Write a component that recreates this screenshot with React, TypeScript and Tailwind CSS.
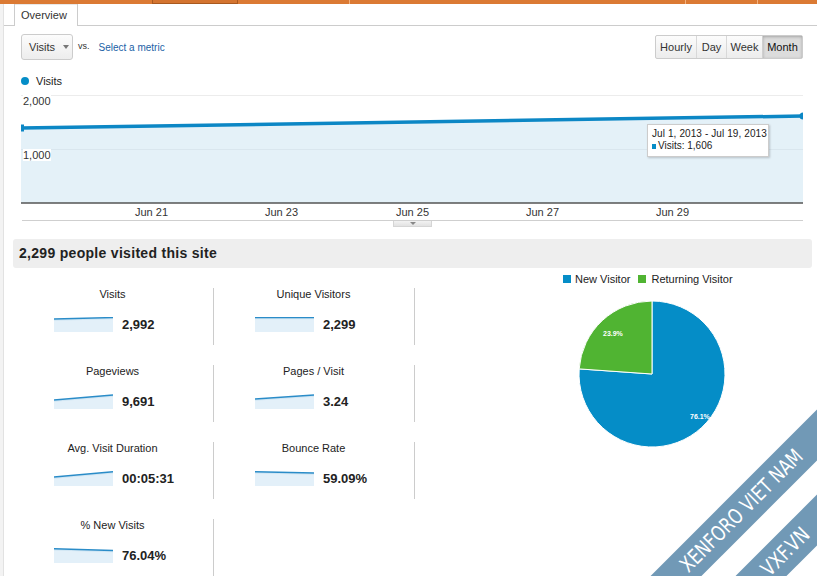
import React from "react";

type Metric = { title: string; value: string; l: number; r: number };

const metrics: Metric[] = [
  { title: "Visits", value: "2,992", l: 2, r: 0.5 },
  { title: "Unique Visitors", value: "2,299", l: 0.5, r: 0.5 },
  { title: "Pageviews", value: "9,691", l: 6, r: 1 },
  { title: "Pages / Visit", value: "3.24", l: 5, r: 1 },
  { title: "Avg. Visit Duration", value: "00:05:31", l: 6, r: 0.7 },
  { title: "Bounce Rate", value: "59.09%", l: 0.7, r: 2 },
  { title: "% New Visits", value: "76.04%", l: 0.7, r: 2.5 },
];

function Spark({ l, r }: { l: number; r: number }) {
  return (
    <svg width="59" height="15" viewBox="0 0 59 15" className="block shrink-0">
      <polygon points={`0,${l} 59,${r} 59,15 0,15`} fill="#e3f0f9" />
      <polyline points={`0,${l + 1.2} 59,${r + 1.2}`} stroke="#cfe5f3" strokeWidth="1.2" fill="none" />
      <polyline points={`0,${l} 59,${r}`} stroke="#2a8cc8" strokeWidth="1.4" fill="none" />
    </svg>
  );
}

function MetricCell({ m }: { m: Metric }) {
  return (
    <div className="h-[57px] border-r border-[#cccccc] flex flex-col">
      <div className="h-[12px] leading-[12px] text-[11px] text-[#222] text-center pr-[1px]">{m.title}</div>
      <div className="mt-[17px] h-[15px] flex items-center pl-[41px]">
        <Spark l={m.l} r={m.r} />
        <span className="ml-[9px] text-[13px] font-bold text-[#222] leading-[15px]">{m.value}</span>
      </div>
    </div>
  );
}

const axisLabels = [
  { t: "Jun 21", x: 130 },
  { t: "Jun 23", x: 260 },
  { t: "Jun 25", x: 391 },
  { t: "Jun 27", x: 521 },
  { t: "Jun 29", x: 651 },
];

export default function App() {
  const W = 782;
  const y0 = 33;
  const y1 = 21;
  return (
    <div className="relative w-[817px] h-[576px] overflow-hidden bg-white font-['Liberation_Sans',Arial,sans-serif] text-[#222]">
      {/* top orange bar */}
      <div className="relative h-[4px] bg-[#db7a34] flex">
        <div className="w-[152px]" />
        <div className="w-[86px] h-[4px] border-x border-b border-[#a9591f] bg-[#d47430]" />
        <div className="w-[111px]" />
        <div className="w-[1px] bg-[#f2b27f]" />
        <div className="w-[335px]" />
        <div className="w-[1px] bg-[#f2b27f]" />
        <div className="w-[71px]" />
        <div className="w-[1px] bg-[#f2b27f]" />
      </div>
      <div className="flex">
        {/* left strip */}
        <div className="w-[4px] h-[572px] bg-[#f3f3f3] border-r border-[#e2e2e2]" />
        <div className="flex-1 min-w-0">
          {/* tab row */}
          <div className="h-[22px] border-b border-[#cccccc] pl-[10px] flex items-end">
            <div className="h-[22px] w-[64px] border-x border-[#cccccc] bg-white -mb-[1px] flex items-center pl-[6px] text-[11px] text-[#333] shadow-[inset_0_1px_0_#e8e8e8]">
              Overview
            </div>
          </div>

          {/* controls */}
          <div className="mt-[8px] pl-[17px] pr-[14px] flex items-start justify-between">
            <div className="flex items-start">
              <div className="w-[52px] h-[26px] rounded-[3px] border border-[#cccccc] bg-gradient-to-b from-[#fcfcfc] to-[#ededed] flex items-center pl-[7px] text-[11px] text-[#333]">
                <span>Visits</span>
                <span className="ml-[8px] w-0 h-0 border-l-[3.5px] border-r-[3.5px] border-t-[4px] border-l-transparent border-r-transparent border-t-[#777]" />
              </div>
              <span className="ml-[5px] mt-[7px] text-[9px] leading-[10px] text-[#333]">vs.</span>
              <span className="ml-[9px] mt-[8px] text-[10px] leading-[12px] text-[#1a5fa6]">Select a metric</span>
            </div>
            <div className="mt-[1px] flex h-[24px] rounded-[2px] border border-[#cccccc] bg-gradient-to-b from-[#fcfcfc] to-[#ececec] text-[11px] text-[#333]">
              <div className="w-[41px] flex items-center justify-center border-r border-[#d8d8d8]">Hourly</div>
              <div className="w-[30px] flex items-center justify-center border-r border-[#d8d8d8]">Day</div>
              <div className="w-[36px] flex items-center justify-center border-r border-[#d0d0d0]">Week</div>
              <div className="w-[39px] flex items-center justify-center bg-[#dcdcdc] shadow-[inset_0_1px_3px_rgba(0,0,0,0.25)] text-[#111]">Month</div>
            </div>
          </div>

          {/* legend */}
          <div className="mt-[15px] h-[12px] pl-[17px] flex items-center text-[11px]">
            <span className="w-[8px] h-[8px] rounded-full bg-[#058dc7]" />
            <span className="ml-[7px]">Visits</span>
          </div>

          {/* chart */}
          <div className="relative mt-[8px] ml-[17px] w-[782px]">
            <svg width={W} height="109" viewBox={`0 0 ${W} 109`} className="block">
              <line x1="0" y1="0.5" x2={W} y2="0.5" stroke="#ececec" />
              <polygon points={`0,${y0} ${W},${y1} ${W},108 0,108`} fill="#e4f1f8" />
              <line x1="0" y1="54.5" x2={W} y2="54.5" stroke="#d9e6ee" />
              <line x1="0" y1={y0} x2={W} y2={y1} stroke="#0c87c5" strokeWidth="3.5" />
              <circle cx={W} cy={y1} r="3.5" fill="#0c87c5" />
              <rect x="0" y={y0 - 3.5} width="3" height="7" fill="#0c87c5" />
              <line x1="0" y1="108" x2={W} y2="108" stroke="#555" strokeWidth="1.5" />
            </svg>
            <span className="absolute left-[2px] top-[0px] text-[11px] leading-[12px] text-[#333] bg-white">2,000</span>
            <span className="absolute left-[2px] top-[54px] text-[11px] leading-[12px] text-[#333] bg-white">1,000</span>
            {/* tooltip */}
            <div className="absolute left-[626px] top-[29px] w-[122px] h-[33px] bg-white border border-[#cccccc] shadow-[1px_1px_2px_rgba(0,0,0,0.2)] px-[4px] pt-[3px] text-[10px] leading-[12px] text-[#222] whitespace-nowrap">
              <div className="tracking-[0.1px]">Jul 1, 2013 - Jul 19, 2013</div>
              <div className="flex items-center">
                <span className="w-[4px] h-[5px] bg-[#058dc7] mr-[2px]" />
                <span>Visits: 1,606</span>
              </div>
            </div>
            {/* axis labels */}
            <div className="relative h-[16px]">
              {axisLabels.map((a) => (
                <span key={a.t} className="absolute top-[2px] text-[11px] leading-[12px] text-[#333]" style={{ left: a.x - 16 }}>
                  {a.t}
                </span>
              ))}
            </div>
            <div className="h-[1px] ml-[1px] bg-[#cfcfcf]" />
            <div className="ml-[372px] w-[39px] h-[6px] bg-gradient-to-b from-[#f2f2f2] to-[#e2e2e2] border-x border-b border-[#d5d5d5] flex justify-center pt-[1px]">
              <span className="w-0 h-0 border-l-[3px] border-r-[3px] border-t-[3px] border-l-transparent border-r-transparent border-t-[#888]" />
            </div>
          </div>

          {/* section header */}
          <div className="mt-[12px] ml-[9px] mr-[5px] h-[29px] rounded-[3px] bg-[#eeeeee] flex items-center pl-[6px]">
            <span className="text-[14px] font-bold text-[#222] tracking-[0.3px]">2,299 people visited this site</span>
          </div>

          {/* metrics + pie */}
          <div className="ml-[9px] flex">
            <div className="pt-[20px] w-[402px] grid grid-cols-2 gap-y-[20px] auto-rows-[57px]">
              {metrics.map((m) => (
                <MetricCell key={m.title} m={m} />
              ))}
            </div>
            <div className="flex-1">
              <div className="mt-[5px] ml-[148px] h-[12px] flex items-center text-[11px] text-[#222]">
                <span className="w-[8px] h-[8px] bg-[#058dc7]" />
                <span className="ml-[4px]">New Visitor</span>
                <span className="ml-[8px] w-[8px] h-[8px] bg-[#50b432]" />
                <span className="ml-[5px]">Returning Visitor</span>
              </div>
              <svg width="160" height="160" viewBox="0 0 160 160" className="block mt-[9px] ml-[157px]">
                <path d="M80,80 L80,7 A73,73 0 1 1 7.18,74.9 Z" fill="#058dc7" stroke="#fff" strokeWidth="1" />
                <path d="M80,80 L7.18,74.9 A73,73 0 0 1 80,7 Z" fill="#50b432" stroke="#fff" strokeWidth="1" />
                <text x="31" y="42" fontSize="7" fontWeight="bold" fill="#fff" fontFamily="Liberation Sans, Arial, sans-serif">23.9%</text>
                <text x="118" y="125" fontSize="7" fontWeight="bold" fill="#fff" fontFamily="Liberation Sans, Arial, sans-serif">76.1%</text>
              </svg>
            </div>
          </div>
        </div>
      </div>

      {/* watermark banners */}
      <div className="absolute left-[540px] top-[494px] w-[400px] h-[36px] bg-[#7199b6] -rotate-45 flex items-center justify-center">
        <span className="text-white text-[21px] leading-[22px] font-['DejaVu_Sans_Condensed','Liberation_Sans',sans-serif] scale-x-[0.86] translate-x-[2px]">XENFORO VIET NAM</span>
      </div>
      <div className="absolute left-[638px] top-[531px] w-[300px] h-[36px] bg-[#7199b6] -rotate-45 flex items-center justify-center">
        <span className="text-white text-[21px] leading-[22px] font-['DejaVu_Sans_Condensed','Liberation_Sans',sans-serif] scale-x-[0.88] -translate-x-[4px]">VXF.VN</span>
      </div>
    </div>
  );
}
